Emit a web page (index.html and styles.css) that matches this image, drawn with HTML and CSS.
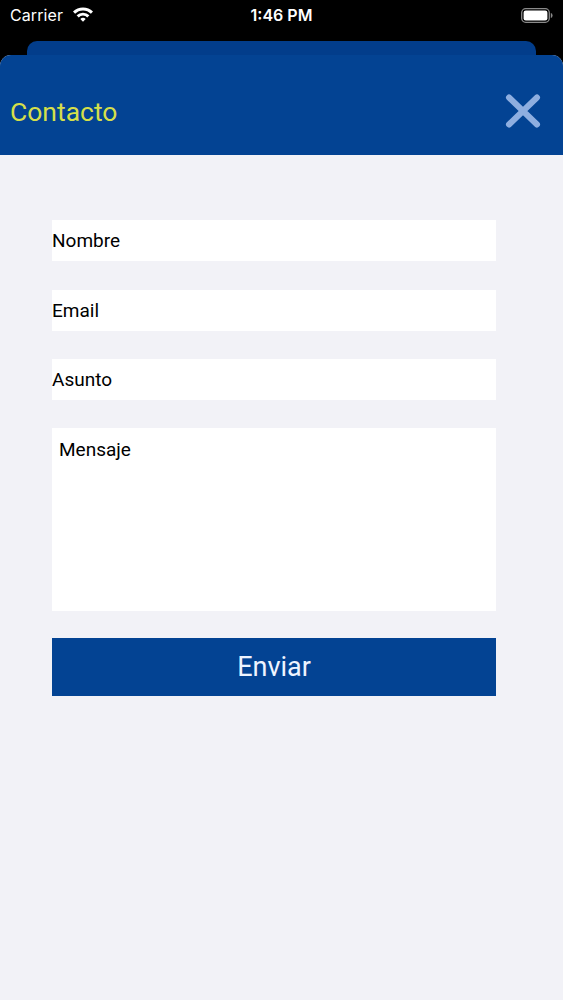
FILE: index.html
```html
<!DOCTYPE html>
<html lang="es">
<head>
<meta charset="utf-8">
<title>Contacto</title>
<link rel="stylesheet" href="styles.css">
</head>
<body>
<div class="screen">
  <div class="status-bar">
    <div class="sb-left">
      <span class="carrier">Carrier</span>
      <svg class="wifi" width="22" height="16" viewBox="0 0 22 16">
        <path d="M1 5.6 A14 14 0 0 1 21 5.6 L18.9 7.8 A11 11 0 0 0 3.1 7.8 Z" fill="#fff"/>
        <path d="M4.6 9.3 A9 9 0 0 1 17.4 9.3 L15.3 11.4 A6 6 0 0 0 6.7 11.4 Z" fill="#fff"/>
        <path d="M8.3 13 A4 4 0 0 1 13.7 13 L11 15.7 Z" fill="#fff"/>
      </svg>
    </div>
    <div class="sb-time">1:46 PM</div>
    <div class="sb-right">
      <svg class="battery" width="32" height="15" viewBox="0 0 32 15">
        <rect x="0.7" y="0.7" width="27.6" height="13.6" rx="4" fill="none" stroke="#8a8a8a" stroke-width="1.3"/>
        <rect x="2.6" y="2.6" width="23.8" height="9.8" rx="2.2" fill="#fff"/>
        <path d="M29.8 5 Q31.6 5.4 31.6 7.5 Q31.6 9.6 29.8 10 Z" fill="#8a8a8a"/>
      </svg>
    </div>
  </div>

  <div class="sheet-back"></div>
  <div class="sheet">
    <header class="sheet-header">
      <h1 class="title">Contacto</h1>
      <svg class="close" width="36" height="34" viewBox="0 0 36 34">
        <path d="M4 3.5 L32 30.5 M32 3.5 L4 30.5" stroke="#8eaee0" stroke-width="6" stroke-linecap="round"/>
      </svg>
    </header>
    <main class="content">
      <form class="form">
        <div class="field field-name">Nombre</div>
        <div class="field field-email">Email</div>
        <div class="field field-subject">Asunto</div>
        <div class="field field-area">Mensaje</div>
        <div class="button">Enviar</div>
      </form>
    </main>
  </div>
</div>
</body>
</html>
```

FILE: styles.css
```css
html, body {
  margin: 0;
  padding: 0;
  background: #000;
}

.screen {
  width: 563px;
  height: 1000px;
  background: #000;
  display: flex;
  flex-direction: column;
  overflow: hidden;
  font-family: Roboto, "Noto Sans", sans-serif;
}

.status-bar {
  height: 41px;
  flex: none;
  display: flex;
  align-items: flex-start;
  justify-content: space-between;
  padding: 4px 10px 0 10px;
  box-sizing: border-box;
  color: #fff;
  font-family: Inter, "Liberation Sans", sans-serif;
  font-size: 16px;
  position: relative;
}

.sb-left {
  display: flex;
  align-items: center;
  gap: 9px;
  height: 22px;
}

.carrier {
  font-weight: 400;
  letter-spacing: 0.1px;
}

.wifi {
  margin-top: -2px;
}

.sb-time {
  position: absolute;
  left: 0;
  right: 0;
  top: 4px;
  text-align: center;
  font-weight: 600;
  line-height: 22px;
}

.sb-right {
  display: flex;
  align-items: center;
  height: 22px;
}

.sheet-back {
  flex: none;
  height: 16px;
  margin: 0 27px;
  background: #023d8b;
  border-radius: 10px 10px 0 0;
}

.sheet {
  flex: 1;
  margin-top: -2px;
  display: flex;
  flex-direction: column;
  border-radius: 11px 11px 0 0;
  overflow: hidden;
  background: #f2f2f7;
}

.sheet-header {
  height: 100px;
  flex: none;
  background: #034393;
  display: flex;
  align-items: center;
  justify-content: space-between;
  padding: 10px 22px 0 10px;
  box-sizing: border-box;
}

.title {
  margin: 0;
  font-weight: 400;
  font-size: 26.5px;
  color: #d5df4a;
  padding-top: 2px;
}

.close {
  display: block;
  margin-top: 2px;
}

.content {
  flex: 1;
  background: #f2f2f7;
  padding: 65px 0 0 52px;
}

.form {
  width: 444px;
  display: flex;
  flex-direction: column;
}

.field {
  height: 41px;
  background: #fff;
  display: flex;
  align-items: center;
  font-size: 19px;
  color: #000;
  margin-bottom: 28px;
}

.field-name {
  margin-bottom: 29px;
}

.field-area {
  height: 183px;
  align-items: flex-start;
  padding: 10px 7px 0;
  box-sizing: border-box;
  margin-bottom: 27px;
}

.button {
  height: 58px;
  background: #034393;
  color: #eef4ff;
  font-size: 27px;
  display: flex;
  align-items: center;
  justify-content: center;
}
```
